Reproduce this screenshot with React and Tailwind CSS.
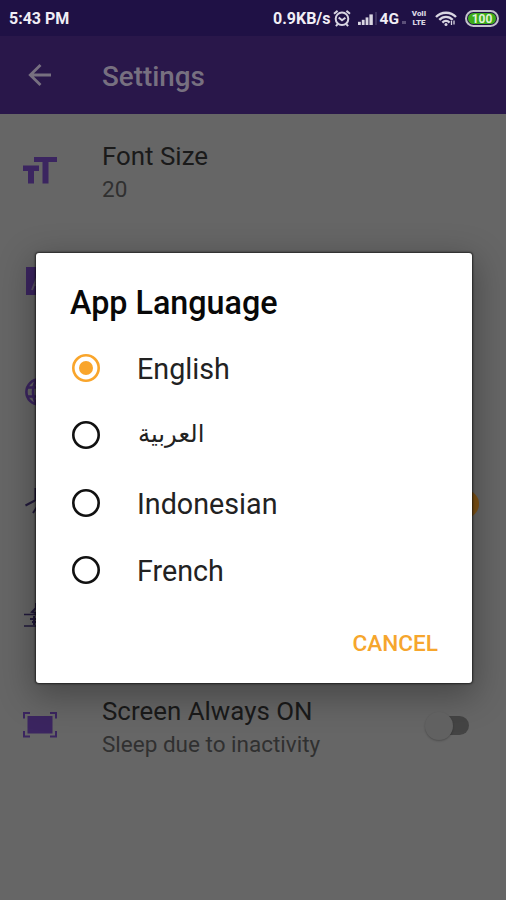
const PURPLE = '#3b2560';

function StatusBar() {
  return (
    <div className="flex h-9 items-center bg-[#1f1145] pt-px pl-[9px] pr-[7px] text-[#f1eef6]">
      <span className="text-[16px] leading-5 font-bold whitespace-nowrap">5:43 PM</span>
      <span className="ml-auto text-[16px] leading-5 font-bold whitespace-nowrap">0.9KB/s</span>
      <svg className="ml-[2px] h-[19px] w-[18px] shrink-0" viewBox="0 0 18 19" fill="none" stroke="#d9d6e2" strokeWidth="2">
        <circle cx="9" cy="9.8" r="6.3" />
        <path d="M5.7 8.5 9 11.3l3.4-2.6M1 4.8 4.6 1.9M17 4.8 13.4 1.9M4.7 15.2l-1.8 2M13.3 15.2l1.8 2" />
      </svg>
      <svg className="ml-[7px] h-[15px] w-5 shrink-0" viewBox="0 0 20 15" fill="#d9d6e2">
        <rect x="0" y="10.8" width="2.8" height="3.2" />
        <rect x="3.8" y="8.8" width="2.8" height="5.2" />
        <rect x="7.6" y="6.4" width="2.8" height="7.6" />
        <rect x="11.4" y="3.4" width="3.4" height="10.6" />
        <rect x="17" y="1" width="2" height="13" fill="#3d3160" />
      </svg>
      <span className="ml-[2px] text-[15.5px] leading-5 font-bold">4G</span>
      <svg className="ml-[3px] h-[6px] w-[5px] shrink-0 translate-y-[3px]" viewBox="0 0 5 6" fill="#5b4f78">
        <path d="M0 2h4v3H0z" />
      </svg>
      <span className="ml-[3px] flex w-[18px] flex-col items-center gap-px text-[8px] leading-[8px] font-black text-[#d9d6e2]">
        <span className="h-2">VoII</span>
        <span className="h-2">LTE</span>
      </span>
      <svg className="ml-[7px] h-4 w-[23px] shrink-0" viewBox="0 0 23 16" fill="none" stroke="#d9d6e2" strokeWidth="2.3">
        <path d="M1 6.1C6.2 .3 15.8 .3 21 6.1M4.3 8.9c3.7-4 9.7-4 13.4 0M7.4 11.6c2.1-2.2 5.1-2.2 7.2 0" />
        <circle cx="11" cy="13.4" r="1.5" fill="#d9d6e2" stroke="none" />
        <path d="M16.5 10v4M19 13.5V9.5" strokeWidth="1.3" />
      </svg>
      <span className="ml-[7px] flex h-[17px] w-[34px] items-center justify-center rounded-full border-2 border-[#c3c1cd] bg-[#1f1145] p-px">
        <span className="flex h-full w-full items-center justify-center rounded-full bg-[#3cac1b] text-[12px] leading-none font-bold text-[#e0f2d9]">100</span>
      </span>
    </div>
  );
}

function AppBar() {
  return (
    <div className="flex h-[78px] items-center bg-[#29174a] pl-7 text-[#777080]">
      <svg className="h-6 w-6" viewBox="0 0 24 24" fill="none" stroke="currentColor" strokeWidth="2.8">
        <path d="M23 12H3M12.5 2 2.3 12l10.2 10" />
      </svg>
      <h1 className="ml-[50px] pt-1 text-[27.8px] leading-8 font-medium">Settings</h1>
    </div>
  );
}

function SettingRow({ icon, title, subtitle, children }) {
  return (
    <div className="flex h-[111px] items-center pr-9 pl-[23px]">
      <div className="w-[79px] shrink-0 pb-[3px]">{icon}</div>
      <div className="flex-1">
        {title && <div className="text-[25.9px] leading-[34px] whitespace-nowrap text-[#1a1a1a]">{title}</div>}
        {subtitle && <div className="text-[22.5px] leading-[32px] whitespace-nowrap text-[#303030]">{subtitle}</div>}
      </div>
      {children}
    </div>
  );
}

const icons = {
  fontSize: (
    <svg className="h-[34px] w-[34px]" viewBox="0 0 34 34" fill={PURPLE}>
      <path d="M11 4h23v5h-8.5v21.5h-6V9H11z" />
      <path d="M0 12.5h16V18h-5v12.5H5V18H0z" />
    </svg>
  ),
  translate: (
    <svg className="h-[34px] w-[34px]" viewBox="0 0 34 34">
      <rect x="3" y="3" width="28" height="28" fill={PURPLE} />
      <path d="m9 26 6-15 6 15M11 21h8" fill="none" stroke="#5b5365" strokeWidth="2" />
    </svg>
  ),
  globe: (
    <svg className="h-[34px] w-[34px]" viewBox="0 0 34 34" fill="none" stroke={PURPLE} strokeWidth="2.6">
      <circle cx="16" cy="17" r="12.6" />
      <ellipse cx="16" cy="17" rx="6" ry="12.6" />
      <path d="M4 12.5h24M4 21.5h24" />
    </svg>
  ),
  tools: (
    <svg className="h-[34px] w-[34px]" viewBox="0 0 34 34" fill="none" stroke="#221a3c" strokeWidth="2">
      <path d="M2.5 19.5 12 14.5M10 27l4-6M12.5 2v13" />
    </svg>
  ),
  speed: (
    <svg className="h-[34px] w-[34px]" viewBox="0 0 34 34" fill="none" stroke="#221a3c" strokeWidth="2">
      <path d="M1 17.5h14M1 29h14" strokeWidth="1.6" />
      <path d="M13 6v5l-4 4 4 1M7 22h8M9 25h6M11 19v9" />
    </svg>
  ),
  screen: (
    <svg className="h-[34px] w-[34px]" viewBox="0 0 34 34" fill="none" stroke={PURPLE} strokeWidth="2">
      <rect x="4.5" y="8" width="25" height="17.5" fill={PURPLE} stroke="none" />
      <path d="M1 10.5V5h6M27 5h6v5.5M33 23v5.5h-6M7 28.5H1V23" />
    </svg>
  ),
};

function Toggle({ on }) {
  return on ? (
    <div className="-mr-[9px] mb-px flex h-7 w-12 items-center justify-end">
      <div className="h-7 w-7 rounded-full bg-[#805315]" />
    </div>
  ) : (
    <div className="mr-px mb-0.5 flex h-7 w-11 items-center">
      <div className="z-10 h-7 w-7 shrink-0 rounded-full bg-[#616161] shadow-[0_1px_2px_rgba(0,0,0,0.25)]" />
      <div className="-ml-3.5 h-[19px] w-[30px] rounded-full bg-[#444444]" />
    </div>
  );
}

function Option({ label, selected, rtl }) {
  return (
    <div className="flex h-[67.5px] items-center">
      <svg className="h-7 w-7 shrink-0" viewBox="0 0 28 28" fill="none" stroke={selected ? '#f9a52b' : '#111111'} strokeWidth="2.6">
        <circle cx="14" cy="14" r="12.7" />
        {selected && <circle cx="14" cy="14" r="7" fill="#f9a52b" stroke="none" />}
      </svg>
      <span
        dir={rtl ? 'rtl' : 'ltr'}
        className={
          rtl
            ? "ml-[38px] pb-[3px] font-['DejaVu_Sans',sans-serif] text-[24.3px] leading-8 text-[#222222]"
            : 'ml-[37px] pt-[2px] text-[28.7px] leading-8 text-[#222222]'
        }
      >
        {label}
      </span>
    </div>
  );
}

function LanguageDialog() {
  return (
    <div className="absolute top-[253px] left-9 flex h-[430px] w-[436px] flex-col rounded-[3px] bg-white pl-9 shadow-[0_0_2px_1px_rgba(0,0,0,0.6),0_10px_34px_4px_rgba(0,0,0,0.3)]">
      <h2 className="-ml-0.5 pt-[30px] text-[32.3px] leading-10 font-medium whitespace-nowrap text-[#080808]">App Language</h2>
      <div className="mt-[11px]">
        <Option label="English" selected />
        <Option label="العربية" rtl />
        <Option label="Indonesian" />
        <Option label="French" />
      </div>
      <button className="mt-[26px] mr-[34px] self-end text-[22.6px] leading-7 font-medium text-[#f6a62d]">CANCEL</button>
    </div>
  );
}

export default function App() {
  return (
    <div className="relative h-[900px] w-[506px] overflow-hidden bg-[#666666] font-[Roboto,sans-serif]">
      <StatusBar />
      <AppBar />
      <div className="pt-0.5">
        <SettingRow icon={icons.fontSize} title="Font Size" subtitle="20" />
        <SettingRow icon={icons.translate} />
        <SettingRow icon={icons.globe} />
        <SettingRow icon={icons.tools}>
          <Toggle on />
        </SettingRow>
        <SettingRow icon={icons.speed} />
        <SettingRow icon={icons.screen} title="Screen Always ON" subtitle="Sleep due to inactivity">
          <Toggle />
        </SettingRow>
      </div>
      <LanguageDialog />
    </div>
  );
}
